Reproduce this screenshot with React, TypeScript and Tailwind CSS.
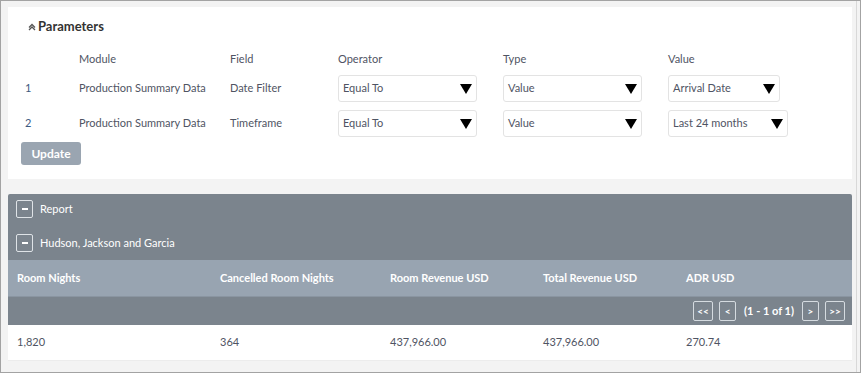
import React from "react";

const params = [
  { n: "1", module: "Production Summary Data", field: "Date Filter", op: "Equal To", type: "Value", value: "Arrival Date", vw: "w-[112px]" },
  { n: "2", module: "Production Summary Data", field: "Timeframe", op: "Equal To", type: "Value", value: "Last 24 months", vw: "w-[120px]" },
];

const cols = ["Room Nights", "Cancelled Room Nights", "Room Revenue USD", "Total Revenue USD", "ADR USD"];
const row = ["1,820", "364", "437,966.00", "437,966.00", "270.74"];

const Select = ({ label, width }: { label: string; width: string }) => (
  <div className={`${width} h-[27px] flex items-center justify-between pl-[4px] pr-[4px] bg-white border border-[#e3e3e3] rounded-[3px]`}>
    <span>{label}</span>
    <svg width="12" height="10" viewBox="0 0 12 10">
      <path d="M0 0 H12 L6 10 Z" fill="#000" />
    </svg>
  </div>
);

const Box = ({ children, w = "w-[20px]" }: { children: React.ReactNode; w?: string }) => (
  <div className={`${w} h-[20px] flex items-center justify-center border border-[#d5dbe0] rounded-[2px] text-[10px] font-bold text-white`}>
    {children}
  </div>
);

const Minus = () => (
  <div className="w-[17px] h-[18px] flex items-center justify-center border border-[#dfe3e7] rounded-[2px]">
    <div className="w-[6px] h-[1.5px] bg-white" />
  </div>
);

export default function App() {
  return (
    <div className="w-[861px] h-[373px] bg-[#f3f3f3] border border-[#a3a3a3] overflow-hidden text-[11px] text-[#4f5463]" style={{ fontFamily: "Lato, 'Open Sans', sans-serif" }}>
      <div className="flex h-full">
        <div className="w-[851px] pl-[7px] pt-[6px]">
          {/* Parameters */}
          <section className="bg-white h-[172px] pl-[13px] pt-[10px]">
            <h2 className="flex items-center gap-[2px] pl-[7px] text-[13px] font-bold text-[#333]">
              <svg width="8" height="8" viewBox="0 0 8 8" className="text-[#555]">
                <path d="M1 4.5 L4 1.5 L7 4.5 M1 7 L4 4 L7 7" fill="none" stroke="currentColor" strokeWidth="1.3" />
              </svg>
              Parameters
            </h2>
            <div className="mt-[14px] pl-[4px] grid grid-cols-[54px_151px_108px_165px_165px_auto] items-center">
              <div />
              <div>Module</div>
              <div>Field</div>
              <div>Operator</div>
              <div>Type</div>
              <div>Value</div>
            </div>
            {params.map((p) => (
              <div key={p.n} className="mt-[8px] pl-[4px] grid grid-cols-[54px_151px_108px_165px_165px_auto] items-center">
                <div className="text-[#3d5a80]">{p.n}</div>
                <div>{p.module}</div>
                <div>{p.field}</div>
                <Select label={p.op} width="w-[139px]" />
                <Select label={p.type} width="w-[139px]" />
                <Select label={p.value} width={p.vw} />
              </div>
            ))}
            <button className="mt-[5px] w-[60px] h-[23px] bg-[#9aa5b1] rounded-[3px] text-white font-bold text-[12px]">
              Update
            </button>
          </section>

          {/* Report */}
          <section className="mt-[15px] text-white">
            <div className="bg-[#7b848d] h-[32px] flex items-start pt-[6px] pl-[8px] gap-[7px] rounded-t-[2px]">
              <Minus />
              <span className="leading-[18px]">Report</span>
            </div>
            <div className="bg-[#7b848d] h-[34px] flex items-center pl-[8px] gap-[7px]">
              <Minus />
              <span>Hudson, Jackson and Garcia</span>
            </div>
            <div className="bg-[#98a4b1] h-[37px] grid grid-cols-[203px_170px_153px_143px_auto] items-center pl-[9px] font-bold border-b border-[#8a95a1]">
              {cols.map((c) => (
                <div key={c}>{c}</div>
              ))}
            </div>
            <div className="bg-[#7b848d] h-[28px] flex items-center justify-end pr-[7px]">
              <Box>&lt;&lt;</Box>
              <div className="ml-[6px]">
                <Box w="w-[17px]">&lt;</Box>
              </div>
              <span className="font-bold text-[11px] ml-[8px] mr-[8px]">(1 - 1 of 1)</span>
              <Box w="w-[17px]">&gt;</Box>
              <div className="ml-[6px]">
                <Box>&gt;&gt;</Box>
              </div>
            </div>
            <div className="bg-white h-[36px] grid grid-cols-[203px_170px_153px_143px_auto] items-center pl-[9px] text-[#4f5463] border-b border-[#ececec]">
              {row.map((c, i) => (
                <div key={i}>{c}</div>
              ))}
            </div>
          </section>
        </div>
        <div className="ml-[4px] w-[1px] h-full bg-[#d8d8d8]" />
      </div>
    </div>
  );
}
